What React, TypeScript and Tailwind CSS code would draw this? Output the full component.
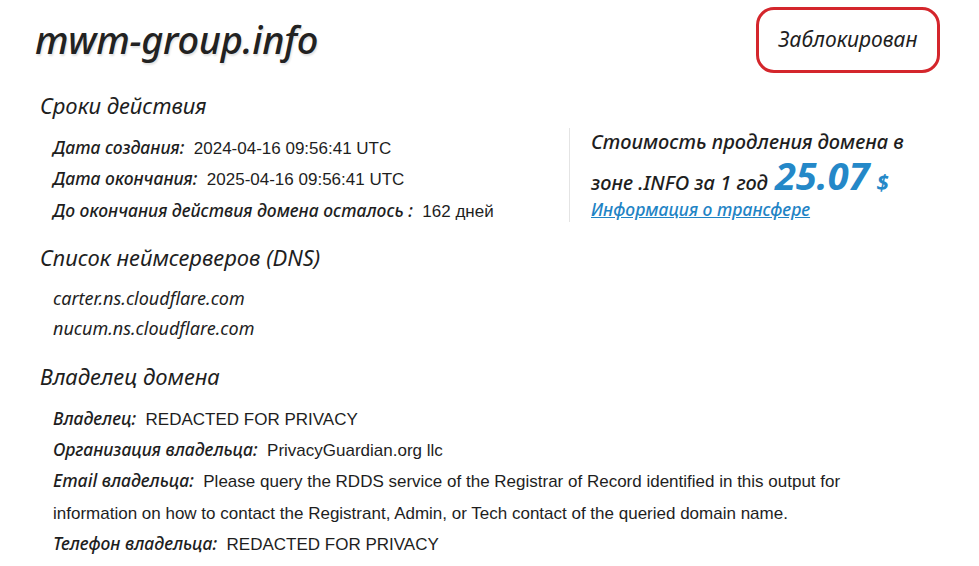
import React from "react";

const rows = [
  { label: "Дата создания:", value: "2024-04-16 09:56:41 UTC" },
  { label: "Дата окончания:", value: "2025-04-16 09:56:41 UTC" },
  { label: "До окончания действия домена осталось :", value: "162 дней" },
];

const owner = [
  { label: "Владелец:", value: "REDACTED FOR PRIVACY" },
  { label: "Организация владельца:", value: "PrivacyGuardian.org llc" },
  {
    label: "Email владельца:",
    value:
      "Please query the RDDS service of the Registrar of Record identified in this output for information on how to contact the Registrant, Admin, or Tech contact of the queried domain name.",
  },
  { label: "Телефон владельца:", value: "REDACTED FOR PRIVACY" },
];

function Field({ label, value }: { label: string; value: string }) {
  return (
    <p className="leading-[31.3px] text-[17px] text-[#1e1e1e]">
      <span className="italic font-medium font-['Noto_Sans',sans-serif] text-[17.5px] leading-[20px]">{label}</span>
      <span className="font-['Liberation_Sans',sans-serif] leading-[20px]">&nbsp; {value}</span>
    </p>
  );
}

export default function App() {
  return (
    <div className="w-[979px] h-[566px] bg-white overflow-hidden font-['Noto_Sans',sans-serif] text-[#1e1e1e]">
      <div className="flex items-start justify-between pl-[35px] pr-[39px] pt-[7px]">
        <h1 className="mt-[9px] text-[38px] leading-[46px] font-medium italic tracking-[-0.3px] text-[#222] [text-shadow:1px_2px_2px_rgba(0,0,0,0.12)]">
          mwm-group.info
        </h1>
        <div className="w-[184px] h-[66px] flex items-center justify-center rounded-[18px] border-[3px] border-[#d4262c] italic text-[21px]">
          Заблокирован
        </div>
      </div>

      <div className="pl-[40px] pr-[40px]">
        <h2 className="mt-[17px] text-[22px] leading-[30px] italic">Сроки действия</h2>
        <div className="flex mt-[12px]">
          <div className="w-[529px] pl-[13px]">
            {rows.map((r) => (
              <Field key={r.label} {...r} />
            ))}
          </div>
          <div className="border-l border-[#e4e4e4] pl-[21px] mt-[-4px] h-[94px]">
            <p className="italic font-medium text-[20px] leading-[28px]">Стоимость продления домена в</p>
            <p className="italic font-medium text-[20px] leading-[38px] h-[38px] flex items-baseline gap-[7px]">
              зоне .INFO за 1 год
              <span className="text-[38px] leading-[38px] font-bold text-[#2488c8]">25.07</span>
              <span className="text-[22px] font-bold text-[#2488c8]">$</span>
            </p>
            <a href="#" className="block mt-[4px] italic font-medium text-[17.5px] leading-[22px] text-[#1f84c5] underline">
              Информация о трансфере
            </a>
          </div>
        </div>

        <h2 className="mt-[16px] text-[22px] leading-[30px] italic">Список неймсерверов (DNS)</h2>
        <div className="pl-[13px] mt-[11px] italic text-[18px] leading-[30px]">
          <p>carter.ns.cloudflare.com</p>
          <p>nucum.ns.cloudflare.com</p>
        </div>

        <h2 className="mt-[18px] text-[22px] leading-[30px] italic">Владелец домена</h2>
        <div className="pl-[13px] mt-[12px] w-[860px]">
          {owner.map((r) => (
            <Field key={r.label} {...r} />
          ))}
        </div>
      </div>
    </div>
  );
}
